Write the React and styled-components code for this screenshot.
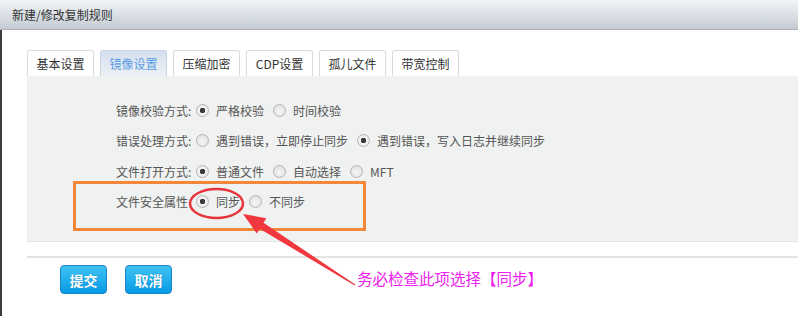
import React from 'react'
import styled, { createGlobalStyle } from 'styled-components'

const GlobalStyle = createGlobalStyle`
  html, body {
    margin: 0;
    padding: 0;
    background: #fff;
  }
  body {
    font-family: "Noto Sans CJK SC", "Noto Sans", sans-serif;
  }
`

const Page = styled.div`
  position: relative;
  width: 798px;
  height: 316px;
  overflow: hidden;
  display: flex;
  flex-direction: column;
  background: #fff;
`
const Header = styled.div`
  height: 29px;
  flex-shrink: 0;
  border-bottom: 1px solid #aab1b9;
  background: linear-gradient(#f1f5f8, #c4cbd2);
  display: flex;
  align-items: center;
  padding-left: 12px;
  font-size: 12px;
  color: #333;
`
const Body = styled.div`
  flex: 1;
  border-left: 2px solid #3c3c3c;
  padding: 20px 0 0 25px;
`
const Tabs = styled.div`
  display: flex;
  gap: 6px;
  height: 26px;
`
const Tab = styled.div`
  width: 67px;
  height: 26px;
  box-sizing: border-box;
  border: 1px solid ${(p) => (p.$active ? '#c8d2e0' : '#d6dce2')};
  border-bottom: none;
  border-radius: 3px 3px 0 0;
  background: ${(p) => (p.$active ? 'linear-gradient(#d3dff0, #eef1f3)' : '#fff')};
  color: ${(p) => (p.$active ? '#5b9ce6' : '#333')};
  font-size: 12px;
  display: flex;
  align-items: center;
  justify-content: center;
`
const Panel = styled.div`
  height: 166px;
  box-sizing: border-box;
  background: #f0f2f1;
  border-bottom: 1px solid #e3e5e4;
  padding: 19px 0 0 89px;
`
const Row = styled.div`
  height: 30.5px;
  display: flex;
  align-items: center;
  font-size: 12px;
  color: #555;
`
const Label = styled.span`
  width: 80px;
  flex-shrink: 0;
`
const Option = styled.span`
  display: flex;
  align-items: center;
  margin-right: 9px;
`
const Radio = styled.span`
  width: 13px;
  height: 13px;
  box-sizing: border-box;
  border-radius: 50%;
  border: 1px solid #b4b4b4;
  background: ${(p) =>
    p.$checked
      ? 'radial-gradient(circle, #3a3a3a 0 2.5px, #f4f4f4 3px, #e2e2e2 100%)'
      : 'radial-gradient(circle at 50% 60%, #f6f6f6 0, #dcdcdc 100%)'};
  margin-right: 7px;
`
const Separator = styled.div`
  margin-top: 14px;
  height: 2px;
  background: #e3e3e3;
`
const Actions = styled.div`
  display: flex;
  gap: 18px;
  margin-top: 7px;
  padding-left: 33px;
`
const Button = styled.button`
  width: 47px;
  height: 29px;
  box-sizing: border-box;
  border: 1px solid #1b83c6;
  border-radius: 4px;
  background: linear-gradient(#3ec2f3, #079ce6);
  color: #fff;
  font-family: inherit;
  font-size: 14px;
  font-weight: bold;
  padding: 0;
  text-shadow: 0 0 1px rgba(0, 60, 120, 0.4);
`
const Annotations = styled.svg`
  position: absolute;
  left: 0;
  top: 0;
  pointer-events: none;
`
const Note = styled.div`
  position: absolute;
  left: 357px;
  top: 270px;
  font-size: 15.5px;
  line-height: 16px;
  color: #ee22ee;
  white-space: nowrap;
`

const tabs = ['基本设置', '镜像设置', '压缩加密', 'CDP设置', '孤儿文件', '带宽控制']

const rows = [
  { label: '镜像校验方式:', options: ['严格校验', '时间校验'], checked: 0 },
  { label: '错误处理方式:', options: ['遇到错误，立即停止同步', '遇到错误，写入日志并继续同步'], checked: 1 },
  { label: '文件打开方式:', options: ['普通文件', '自动选择', 'MFT'], checked: 0 },
  { label: '文件安全属性', options: ['同步', '不同步'], checked: 0 },
]

const App = () => {
  return (
    <Page>
      <GlobalStyle />
      <Header>新建/修改复制规则</Header>
      <Body>
        <Tabs>
          {tabs.map((t, i) => (
            <Tab key={t} $active={i === 1}>
              {t}
            </Tab>
          ))}
        </Tabs>
        <Panel>
          {rows.map((r) => (
            <Row key={r.label}>
              <Label>{r.label}</Label>
              {r.options.map((o, i) => (
                <Option key={o}>
                  <Radio $checked={i === r.checked} />
                  {o}
                </Option>
              ))}
            </Row>
          ))}
        </Panel>
        <Separator />
        <Actions>
          <Button>提交</Button>
          <Button>取消</Button>
        </Actions>
      </Body>

      <Annotations width="798" height="316" viewBox="0 0 798 316">
        <rect x="74.5" y="182.5" width="290" height="47" fill="none" stroke="#f5873a" strokeWidth="3" />
        <ellipse cx="216.5" cy="203.5" rx="26.5" ry="14.5" fill="none" stroke="#e8343c" strokeWidth="2.5" />
        <polygon
          points="243,214 266.4,218.2 263.5,222.8 355.3,284.6 354.7,285.4 259.7,228.8 256.8,233.4"
          fill="#f0383e"
        />
      </Annotations>
      <Note>务必检查此项选择【同步】</Note>
    </Page>
  )
}

export default App
